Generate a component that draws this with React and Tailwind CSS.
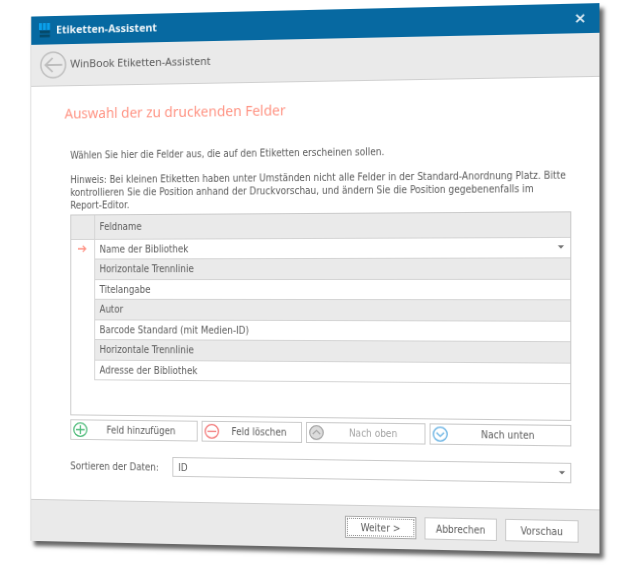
import { useState } from "react";
import clsx from "clsx";

const initialFields = [
  "Name der Bibliothek",
  "Horizontale Trennlinie",
  "Titelangabe",
  "Autor",
  "Barcode Standard (mit Medien-ID)",
  "Horizontale Trennlinie",
  "Adresse der Bibliothek"
];

const Logo = () => (
  <svg width="12" height="15" viewBox="0 0 12 15" aria-hidden="true">
    <path d="M0 0h3.2v7H0zM4.2 0h3.2v7H4.2zM8.4 0h3.2v7H8.4z" fill="#0aa0ec" />
    <path d="M.8 7.8h10.8v2.8H1.2zM.8 11.8h10.8v2.8H.8z" fill="#054a6b" />
  </svg>
);

const CloseIcon = () => (
  <svg width="9" height="9" viewBox="0 0 9 9" fill="none" stroke="#e3eef5" strokeWidth="1.7" aria-hidden="true">
    <path d="M.8.8l7.4 7.4M8.2.8L.8 8.2" />
  </svg>
);

const BackIcon = () => (
  <svg width="28" height="28" viewBox="0 0 28 28" fill="none" stroke="#bdbdbd" aria-hidden="true">
    <circle cx="14" cy="14" r="13" strokeWidth="1.5" />
    <path d="M23.5 14H6M13.5 6.8L5.8 14l7.7 7.2" strokeWidth="1.8" />
  </svg>
);

const RowArrow = () => (
  <svg className="mx-auto" width="9" height="8" viewBox="0 0 9 8" fill="none" stroke="#ff8f80" strokeWidth="1.3" aria-hidden="true">
    <path d="M0 4h8M5 .9L8.1 4 5 7.1" />
  </svg>
);

const Caret = () => (
  <svg
    className="pointer-events-none absolute right-1.5 top-1/2 -translate-y-1/2"
    width="6"
    height="4"
    viewBox="0 0 6 4"
    aria-hidden="true"
  >
    <path d="M0 .3h6L3 3.6z" fill="#707070" />
  </svg>
);

const ActionIcon = ({ color, fill = "none", d }) => (
  <svg
    className="shrink-0"
    width="15"
    height="15"
    viewBox="0 0 15 15"
    fill="none"
    stroke={color}
    strokeWidth="1.3"
    aria-hidden="true"
  >
    <circle cx="7.5" cy="7.5" r="6.8" fill={fill} />
    <path d={d} />
  </svg>
);

const ActionButton = ({ icon, children, disabled, onClick }) => (
  <button
    type="button"
    disabled={disabled}
    onClick={onClick}
    className="flex h-[21px] items-center border border-[#cacaca] bg-white px-0.5 disabled:text-[#a3a3a3]"
  >
    {icon}
    <span className="flex-1 text-center">{children}</span>
  </button>
);

const FooterButton = ({ children, primary }) => (
  <button
    type="button"
    className={clsx(
      "h-[22px] w-[71px] border bg-white",
      primary
        ? "border-[#ababab] outline-1 -outline-offset-3 outline-dotted outline-[#8c8c8c]"
        : "border-[#cacaca]"
    )}
  >
    {children}
  </button>
);

const App = () => {
  const [fields, setFields] = useState(initialFields);
  const [selected, setSelected] = useState(0);

  const swap = (to) => {
    const next = [...fields];
    [next[selected], next[to]] = [next[to], next[selected]];
    setFields(next);
    setSelected(to);
  };

  return (
    <div className="min-h-screen overflow-hidden bg-white pt-[10px] pr-[27px] pb-7 pl-[22px] perspective-[1230px]">
      <div className="rotate-y-[-6deg] border-l border-[#dedede] bg-white font-['DejaVu_Sans_Condensed','Noto_Sans',sans-serif] text-[10px] leading-[13px] text-[#5a5a5a] shadow-[4px_5px_4px_rgba(0,0,0,0.6)]">
        <header className="font-['Noto_Sans',sans-serif] text-[11px]">
          <div className="flex h-[29px] items-center gap-1.5 bg-[#0769a1] pr-3.5 pl-2 text-[#eef5f9]">
            <Logo />
            <span className="flex-1 pb-0.5 font-bold">Etiketten-Assistent</span>
            <button type="button" aria-label="Schließen">
              <CloseIcon />
            </button>
          </div>
          <div className="flex h-[43px] items-center gap-1 border-b border-[#d0d0d0] bg-[#eaeaea] pl-[9px]">
            <button type="button" aria-label="Zurück">
              <BackIcon />
            </button>
            <span className="pb-1">WinBook Etiketten-Assistent</span>
          </div>
        </header>

        <main className="pt-4 pr-[27px] pb-[25px] pl-[41px]">
          <h1 className="-ml-1.5 font-['Noto_Sans',sans-serif] text-sm leading-6 text-[#ff9484]">
            Auswahl der zu druckenden Felder
          </h1>
          <p className="mt-6">Wählen Sie hier die Felder aus, die auf den Etiketten erscheinen sollen.</p>
          <p className="mt-3">
            Hinweis: Bei kleinen Etiketten haben unter Umständen nicht alle Felder in der Standard-Anordnung Platz. Bitte
            kontrollieren Sie die Position anhand der Druckvorschau, und ändern Sie die Position gegebenenfalls im{" "}
            <span className="whitespace-nowrap">Report-Editor.</span>
          </p>

          <div className="mt-[3px] h-[205px] border border-[#cacaca]">
            <table className="w-full border-collapse text-left">
              <thead>
                <tr className="h-6 border-b border-[#d4d4d4] bg-[#eaeaea]">
                  <th className="w-6 border-r border-[#d4d4d4]" aria-label="Auswahl" />
                  <th className="pl-[5px] font-normal">Feldname</th>
                </tr>
              </thead>
              <tbody>
                {fields.map((field, i) => (
                  <tr key={i} className="h-5 even:h-[21px]" onClick={() => setSelected(i)}>
                    <td className="border-r border-[#d4d4d4]">{i === selected && <RowArrow />}</td>
                    <td
                      className={clsx(
                        "border-b border-[#d4d4d4] pl-[5px]",
                        i % 2 === 1 && "bg-[#eaeaea]"
                      )}
                    >
                      {i === selected ? (
                        <div className="relative">
                          <select
                            aria-label="Feldname"
                            defaultValue={field}
                            className="block w-full appearance-none bg-transparent"
                          >
                            <option>{field}</option>
                          </select>
                          <Caret />
                        </div>
                      ) : (
                        field
                      )}
                    </td>
                  </tr>
                ))}
              </tbody>
            </table>
          </div>

          <div className="mt-1 grid grid-cols-[132fr_102fr_119fr_138fr] gap-1">
            <ActionButton icon={<ActionIcon color="#4cba78" d="M7.5 3v9M3 7.5h9" />}>Feld hinzufügen</ActionButton>
            <ActionButton icon={<ActionIcon color="#f27777" d="M3 7.5h9" />}>Feld löschen</ActionButton>
            <ActionButton
              icon={<ActionIcon color="#a9a9a9" fill="#dcdcdc" d="M3.8 9l3.7-3.6L11.2 9" />}
              disabled={selected === 0}
              onClick={() => swap(selected - 1)}
            >
              Nach oben
            </ActionButton>
            <ActionButton
              icon={<ActionIcon color="#64b0e2" d="M3.8 6l3.7 3.6L11.2 6" />}
              disabled={selected === fields.length - 1}
              onClick={() => swap(selected + 1)}
            >
              Nach unten
            </ActionButton>
          </div>

          <div className="mt-4 flex items-center">
            <label htmlFor="sort" className="w-[106px]">
              Sortieren der Daten:
            </label>
            <div className="relative flex-1">
              <select id="sort" className="block h-5 w-full appearance-none border border-[#cacaca] bg-white pl-[5px]">
                <option>ID</option>
              </select>
              <Caret />
            </div>
          </div>
        </main>

        <footer className="flex justify-end gap-2 border-t border-[#d0d0d0] bg-[#eaeaea] py-[10px] pr-5">
          <FooterButton primary>Weiter &gt;</FooterButton>
          <FooterButton>Abbrechen</FooterButton>
          <FooterButton>Vorschau</FooterButton>
        </footer>
      </div>
    </div>
  );
};

export default App;
